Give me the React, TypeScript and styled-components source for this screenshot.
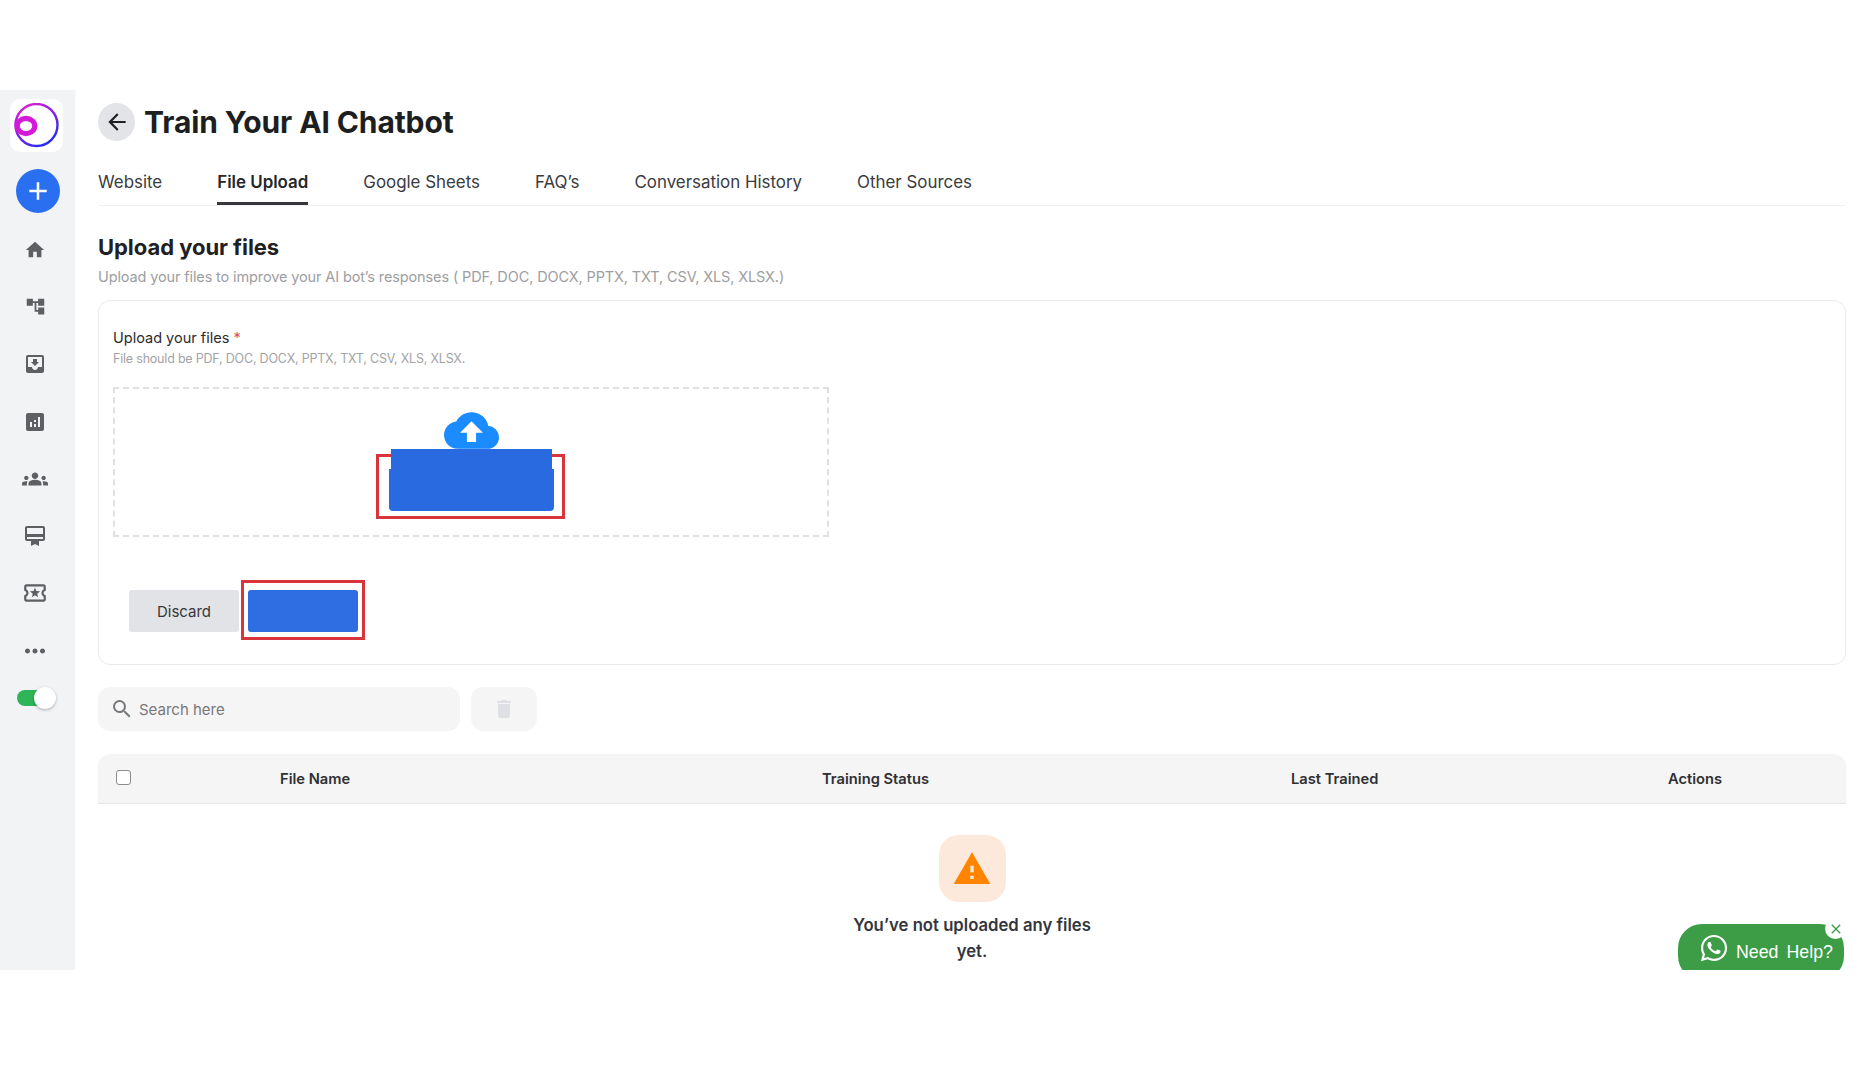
import styled, { createGlobalStyle } from "styled-components";
import { FaWhatsapp } from "react-icons/fa";
import {
  MdAccountTree,
  MdAdd,
  MdAnalytics,
  MdArrowBack,
  MdClose,
  MdCloudUpload,
  MdDelete,
  MdGroups,
  MdHome,
  MdMoreHoriz,
  MdMoveToInbox,
  MdOutlineCardMembership,
  MdOutlineLocalActivity,
  MdSearch,
  MdWarning,
} from "react-icons/md";

const GlobalStyle = createGlobalStyle`
  body {
    margin: 0;
    background: #ffffff;
    font-family: Inter, "Noto Sans", sans-serif;
    color: #1f2023;
  }
`;

const Shell = styled.div`
  display: flex;
  position: relative;
  margin-top: 90px;
  width: 1866px;
  height: 880px;
  overflow: hidden;
`;

const Sidebar = styled.nav`
  flex: 0 0 74px;
  display: flex;
  flex-direction: column;
  align-items: center;
  padding-top: 9px;
  background: #f2f3f5;
  box-shadow: 1px 0 2px rgba(0, 0, 0, 0.06);
`;

const LogoBox = styled.div`
  width: 53px;
  height: 53px;
  margin-left: -1px;
  border-radius: 10px;
  background: #ffffff;
  display: flex;
  align-items: center;
  justify-content: center;
`;

const AddButton = styled.button`
  width: 44px;
  height: 44px;
  margin: 17px 0 0 2px;
  padding: 0;
  border: 0;
  border-radius: 50%;
  background: #2a6ff0;
  color: #ffffff;
  display: flex;
  align-items: center;
  justify-content: center;
`;

const NavList = styled.div`
  display: flex;
  flex-direction: column;
  align-items: center;
  margin: 8px 4px 0 0;
`;

const NavItem = styled.div`
  height: 57.3px;
  width: 40px;
  display: flex;
  align-items: center;
  justify-content: center;
  color: #5d5f63;
`;

const Toggle = styled.div`
  position: relative;
  width: 33px;
  height: 16px;
  margin: 11px 8px 0 0;
  border-radius: 8px;
  background: #2fb457;

  &::after {
    content: "";
    position: absolute;
    right: -6px;
    top: -3px;
    width: 22px;
    height: 22px;
    border-radius: 50%;
    background: #ffffff;
    box-shadow: 0 1px 3px rgba(0, 0, 0, 0.3);
  }
`;

const Main = styled.main`
  flex: 1;
  min-width: 0;
  padding: 13px 20px 0 24px;
`;

const Header = styled.div`
  display: flex;
  align-items: center;
  gap: 9px;
`;

const BackButton = styled.button`
  width: 37px;
  height: 38px;
  padding: 0;
  border: 0;
  border-radius: 50%;
  background: #e3e4e7;
  color: #1f2023;
  display: flex;
  align-items: center;
  justify-content: center;
`;

const Title = styled.h1`
  margin: 0;
  font-size: 30px;
  line-height: 38px;
  font-weight: 700;
  letter-spacing: -0.12px;
  color: #1d1e20;
`;

const Tabs = styled.div`
  display: flex;
  gap: 55px;
  height: 50px;
  margin-top: 14px;
  border-bottom: 1px solid #f1f1f2;
`;

const Tab = styled.div<{ active?: boolean }>`
  height: 50px;
  padding-top: 17px;
  box-sizing: border-box;
  font-size: 16.9px;
  line-height: 21px;
  font-weight: ${(props) => (props.active ? 600 : 400)};
  color: ${(props) => (props.active ? "#26272a" : "#3a3b3e")};
  border-bottom: ${(props) => (props.active ? "3px solid #36373a" : "none")};
`;

const SectionTitle = styled.h2`
  margin: 26px 0 0;
  font-size: 22px;
  line-height: 30px;
  font-weight: 700;
  letter-spacing: -0.05px;
  color: #1f2023;
`;

const SectionText = styled.p`
  margin: 5px 0 0;
  font-size: 14.5px;
  line-height: 20px;
  letter-spacing: -0.125px;
  color: #9d9ea1;
`;

const Card = styled.section`
  box-sizing: border-box;
  height: 365px;
  margin-top: 13px;
  padding: 27px 14px 0;
  border: 1px solid #e9eaec;
  border-radius: 12px;
`;

const FieldLabel = styled.div`
  font-size: 14.5px;
  line-height: 20px;
  color: #2b2c2f;

  span {
    color: #e0505f;
  }
`;

const FieldHint = styled.div`
  margin-top: 2px;
  font-size: 12.5px;
  line-height: 18px;
  letter-spacing: -0.2px;
  color: #a2a3a6;
`;

const DropZone = styled.div`
  box-sizing: border-box;
  width: 716px;
  height: 150px;
  margin-top: 19px;
  padding-top: 14px;
  border: 2px dashed #dfe0e2;
  display: flex;
  flex-direction: column;
  align-items: center;
  color: #1a8cff;
`;

const CloudIcon = styled(MdCloudUpload)`
  flex: none;
`;

const BrowseButton = styled.div`
  position: relative;
  width: 165px;
  height: 42px;
  margin-top: 11px;
  border-radius: 0 0 4px 4px;
  background: #2a6ae0;
  z-index: 0;

  /* the redaction block that sticks out above the button */
  &::before {
    content: "";
    position: absolute;
    left: 2px;
    right: 2px;
    top: -20px;
    height: 20px;
    background: #2a6ae0;
  }

  /* red marker box drawn around the button */
  &::after {
    content: "";
    position: absolute;
    left: -13px;
    right: -11px;
    top: -15px;
    bottom: -8px;
    border: 3px solid #d8343c;
    z-index: -1;
  }
`;

const Actions = styled.div`
  display: flex;
  gap: 9px;
  margin: 53px 0 0 16px;
`;

const DiscardButton = styled.button`
  width: 110px;
  height: 42px;
  padding: 0;
  border: 0;
  border-radius: 3px;
  background: #e2e3e6;
  font-family: inherit;
  font-size: 15px;
  color: #36373a;
`;

const SaveButton = styled.div`
  position: relative;
  width: 110px;
  height: 42px;
  border-radius: 3px;
  background: #2f6ee2;

  &::after {
    content: "";
    position: absolute;
    left: -7px;
    right: -7px;
    top: -10px;
    bottom: -8px;
    border: 3px solid #d8343c;
  }
`;

const Toolbar = styled.div`
  display: flex;
  gap: 11px;
  margin-top: 22px;
`;

const SearchBox = styled.div`
  box-sizing: border-box;
  width: 362px;
  height: 44px;
  padding-left: 12px;
  border-radius: 12px;
  background: #f5f5f5;
  display: flex;
  align-items: center;
  gap: 5px;
  font-size: 15px;
  color: #77787b;
`;

const DeleteButton = styled.div`
  width: 66px;
  height: 44px;
  border-radius: 12px;
  background: #f5f5f5;
  color: #dfe0e3;
  display: flex;
  align-items: center;
  justify-content: center;
`;

const Table = styled.div`
  margin-top: 23px;
`;

const TableHead = styled.div`
  height: 50px;
  box-sizing: border-box;
  padding-top: 1px;
  border-bottom: 1px solid #e9e9ea;
  border-radius: 12px 12px 0 0;
  background: #f5f5f5;
  display: grid;
  grid-template-columns: 154px 542px 469px 377px 1fr;
  align-items: center;
  font-size: 14.7px;
  font-weight: 600;
  color: #2f3033;
`;

const HeadCell = styled.div`
  padding-left: 28px;
`;

const CheckBox = styled.div`
  width: 13px;
  height: 13px;
  margin: -4px 0 0 18px;
  border: 1px solid #8b8c8f;
  border-radius: 3px;
  background: #ffffff;
`;

const EmptyState = styled.div`
  display: flex;
  flex-direction: column;
  align-items: center;
  padding-top: 31px;
`;

const EmptyIcon = styled.div`
  width: 67px;
  height: 67px;
  border-radius: 20px;
  background: #fde9dc;
  color: #ff8500;
  display: flex;
  align-items: center;
  justify-content: center;
`;

const EmptyText = styled.div`
  width: 250px;
  margin-top: 10px;
  text-align: center;
  font-size: 16.7px;
  line-height: 26px;
  font-weight: 600;
  color: #33363c;
`;

const HelpButton = styled.div`
  position: absolute;
  right: 22px;
  bottom: -10px;
  box-sizing: border-box;
  width: 166px;
  height: 56px;
  padding-left: 21px;
  border-radius: 24px;
  background: #3d9c46;
  color: #ffffff;
  display: flex;
  align-items: center;
  gap: 7px;
  font-family: "Liberation Sans", Arial, sans-serif;
  font-size: 17.8px;
  word-spacing: 3px;

  > svg {
    margin-top: -8px;
  }
`;

const HelpClose = styled.div`
  position: absolute;
  right: -2px;
  top: -6px;
  width: 21px;
  height: 21px;
  border-radius: 50%;
  background: #ffffff;
  color: #3d9c46;
  display: flex;
  align-items: center;
  justify-content: center;
`;

const navIcons = [
  <MdHome size={22} />,
  <MdAccountTree size={21} />,
  <MdMoveToInbox size={24} />,
  <MdAnalytics size={24} />,
  <MdGroups size={26} />,
  <MdOutlineCardMembership size={24} />,
  <MdOutlineLocalActivity size={26} />,
  <MdMoreHoriz size={30} />,
];

const tabs = ["Website", "File Upload", "Google Sheets", "FAQ’s", "Conversation History", "Other Sources"];

function Logo() {
  return (
    <svg width="46" height="46" viewBox="0 0 46 46" fill="none">
      <defs>
        <linearGradient id="logoRing" x1="0" y1="0" x2="0.6" y2="1">
          <stop offset="0" stopColor="#f01bd0" />
          <stop offset="1" stopColor="#2a2cf5" />
        </linearGradient>
      </defs>
      <circle cx="22.5" cy="22" r="21" stroke="url(#logoRing)" strokeWidth="2.4" />
      <ellipse cx="12" cy="23" rx="8.8" ry="7.6" stroke="#d41ad8" strokeWidth="5.2" />
    </svg>
  );
}

export default function App() {
  return (
    <>
      <GlobalStyle />
      <Shell>
        <Sidebar>
          <LogoBox>
            <Logo />
          </LogoBox>
          <AddButton>
            <MdAdd size={30} />
          </AddButton>
          <NavList>
            {navIcons.map((icon, i) => (
              <NavItem key={i}>{icon}</NavItem>
            ))}
          </NavList>
          <Toggle />
        </Sidebar>
        <Main>
          <Header>
            <BackButton>
              <MdArrowBack size={26} />
            </BackButton>
            <Title>Train Your AI Chatbot</Title>
          </Header>
          <Tabs>
            {tabs.map((tab) => (
              <Tab key={tab} active={tab === "File Upload"}>
                {tab}
              </Tab>
            ))}
          </Tabs>
          <SectionTitle>Upload your files</SectionTitle>
          <SectionText>Upload your files to improve your AI bot’s responses ( PDF, DOC, DOCX, PPTX, TXT, CSV, XLS, XLSX.)</SectionText>
          <Card>
            <FieldLabel>
              Upload your files <span>*</span>
            </FieldLabel>
            <FieldHint>File should be PDF, DOC, DOCX, PPTX, TXT, CSV, XLS, XLSX.</FieldHint>
            <DropZone>
              <CloudIcon size={55} />
              <BrowseButton />
            </DropZone>
            <Actions>
              <DiscardButton>Discard</DiscardButton>
              <SaveButton />
            </Actions>
          </Card>
          <Toolbar>
            <SearchBox>
              <MdSearch size={24} />
              Search here
            </SearchBox>
            <DeleteButton>
              <MdDelete size={24} />
            </DeleteButton>
          </Toolbar>
          <Table>
            <TableHead>
              <CheckBox />
              <HeadCell>File Name</HeadCell>
              <HeadCell>Training Status</HeadCell>
              <HeadCell>Last Trained</HeadCell>
              <HeadCell>Actions</HeadCell>
            </TableHead>
            <EmptyState>
              <EmptyIcon>
                <MdWarning size={40} />
              </EmptyIcon>
              <EmptyText>You’ve not uploaded any files yet.</EmptyText>
            </EmptyState>
          </Table>
        </Main>
        <HelpButton>
          <FaWhatsapp size={30} />
          Need Help?
          <HelpClose>
            <MdClose size={16} />
          </HelpClose>
        </HelpButton>
      </Shell>
    </>
  );
}
